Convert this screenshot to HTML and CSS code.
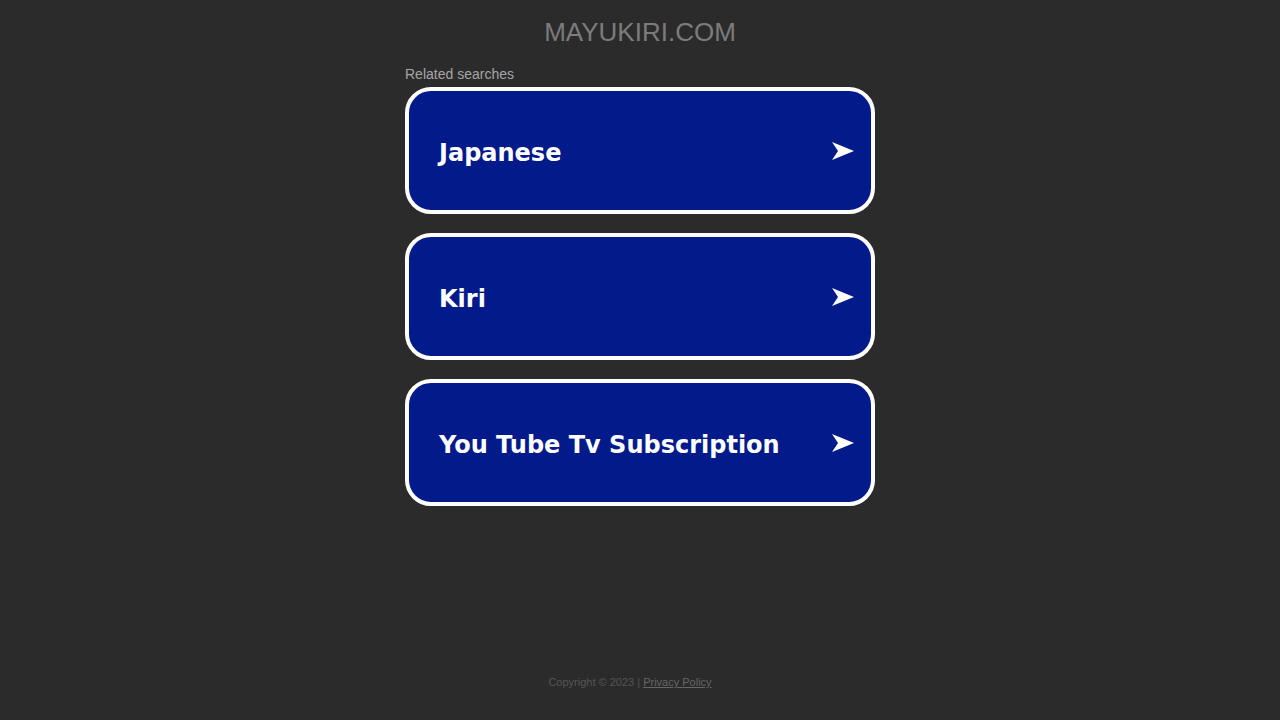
FILE: index.html
```html
<!DOCTYPE html>
<html>
<head>
<meta charset="utf-8">
<title>mayukiri.com</title>
<link rel="stylesheet" href="styles.css">
</head>
<body>
<div class="page">
  <header class="domain">MAYUKIRI.COM</header>
  <main class="content">
    <div class="label">Related searches</div>
    <div class="list">
      <a class="card" href="#"><span class="term">Japanese</span><svg class="arrow" viewBox="0 0 22 18" width="22" height="18"><path d="M0 0 L22 9 L0 18 L6 9 Z" fill="#fff"/></svg></a>
      <a class="card" href="#"><span class="term">Kiri</span><svg class="arrow" viewBox="0 0 22 18" width="22" height="18"><path d="M0 0 L22 9 L0 18 L6 9 Z" fill="#fff"/></svg></a>
      <a class="card" href="#"><span class="term">You Tube Tv Subscription</span><svg class="arrow" viewBox="0 0 22 18" width="22" height="18"><path d="M0 0 L22 9 L0 18 L6 9 Z" fill="#fff"/></svg></a>
    </div>
  </main>
  <footer class="footer">Copyright © 2023 | <a href="#">Privacy Policy</a></footer>
</div>
</body>
</html>
```
FILE: styles.css
```css
html, body {
  margin: 0;
  padding: 0;
  background: #2b2b2b;
  height: 100%;
}
.page {
  height: 720px;
  display: flex;
  flex-direction: column;
  align-items: center;
  font-family: "Liberation Sans", Arial, sans-serif;
}
.domain {
  margin-top: 17px;
  font-size: 26px;
  line-height: 30px;
  color: #7c7c7c;
}
.content {
  width: 470px;
  margin-top: 18px;
  flex: 1;
}
.label {
  font-size: 14px;
  line-height: 18px;
  color: #a5a5a5;
  margin-bottom: 4px;
}
.list {
  display: flex;
  flex-direction: column;
  gap: 19px;
}
.card {
  box-sizing: border-box;
  height: 127px;
  border: 4px solid #fff;
  border-radius: 26px;
  background: #021a8a;
  display: flex;
  align-items: center;
  justify-content: space-between;
  padding: 0 17px 0 30px;
  text-decoration: none;
}
.term {
  font-family: "DejaVu Sans", Verdana, sans-serif;
  font-weight: bold;
  font-size: 24px;
  color: #fff;
  padding-top: 4px;
}
.arrow {
  display: block;
}
.footer {
  margin-bottom: 31px;
  margin-right: 20px;
  font-size: 11px;
  line-height: 14px;
  color: #555;
}
.footer a {
  color: #666;
}
```
